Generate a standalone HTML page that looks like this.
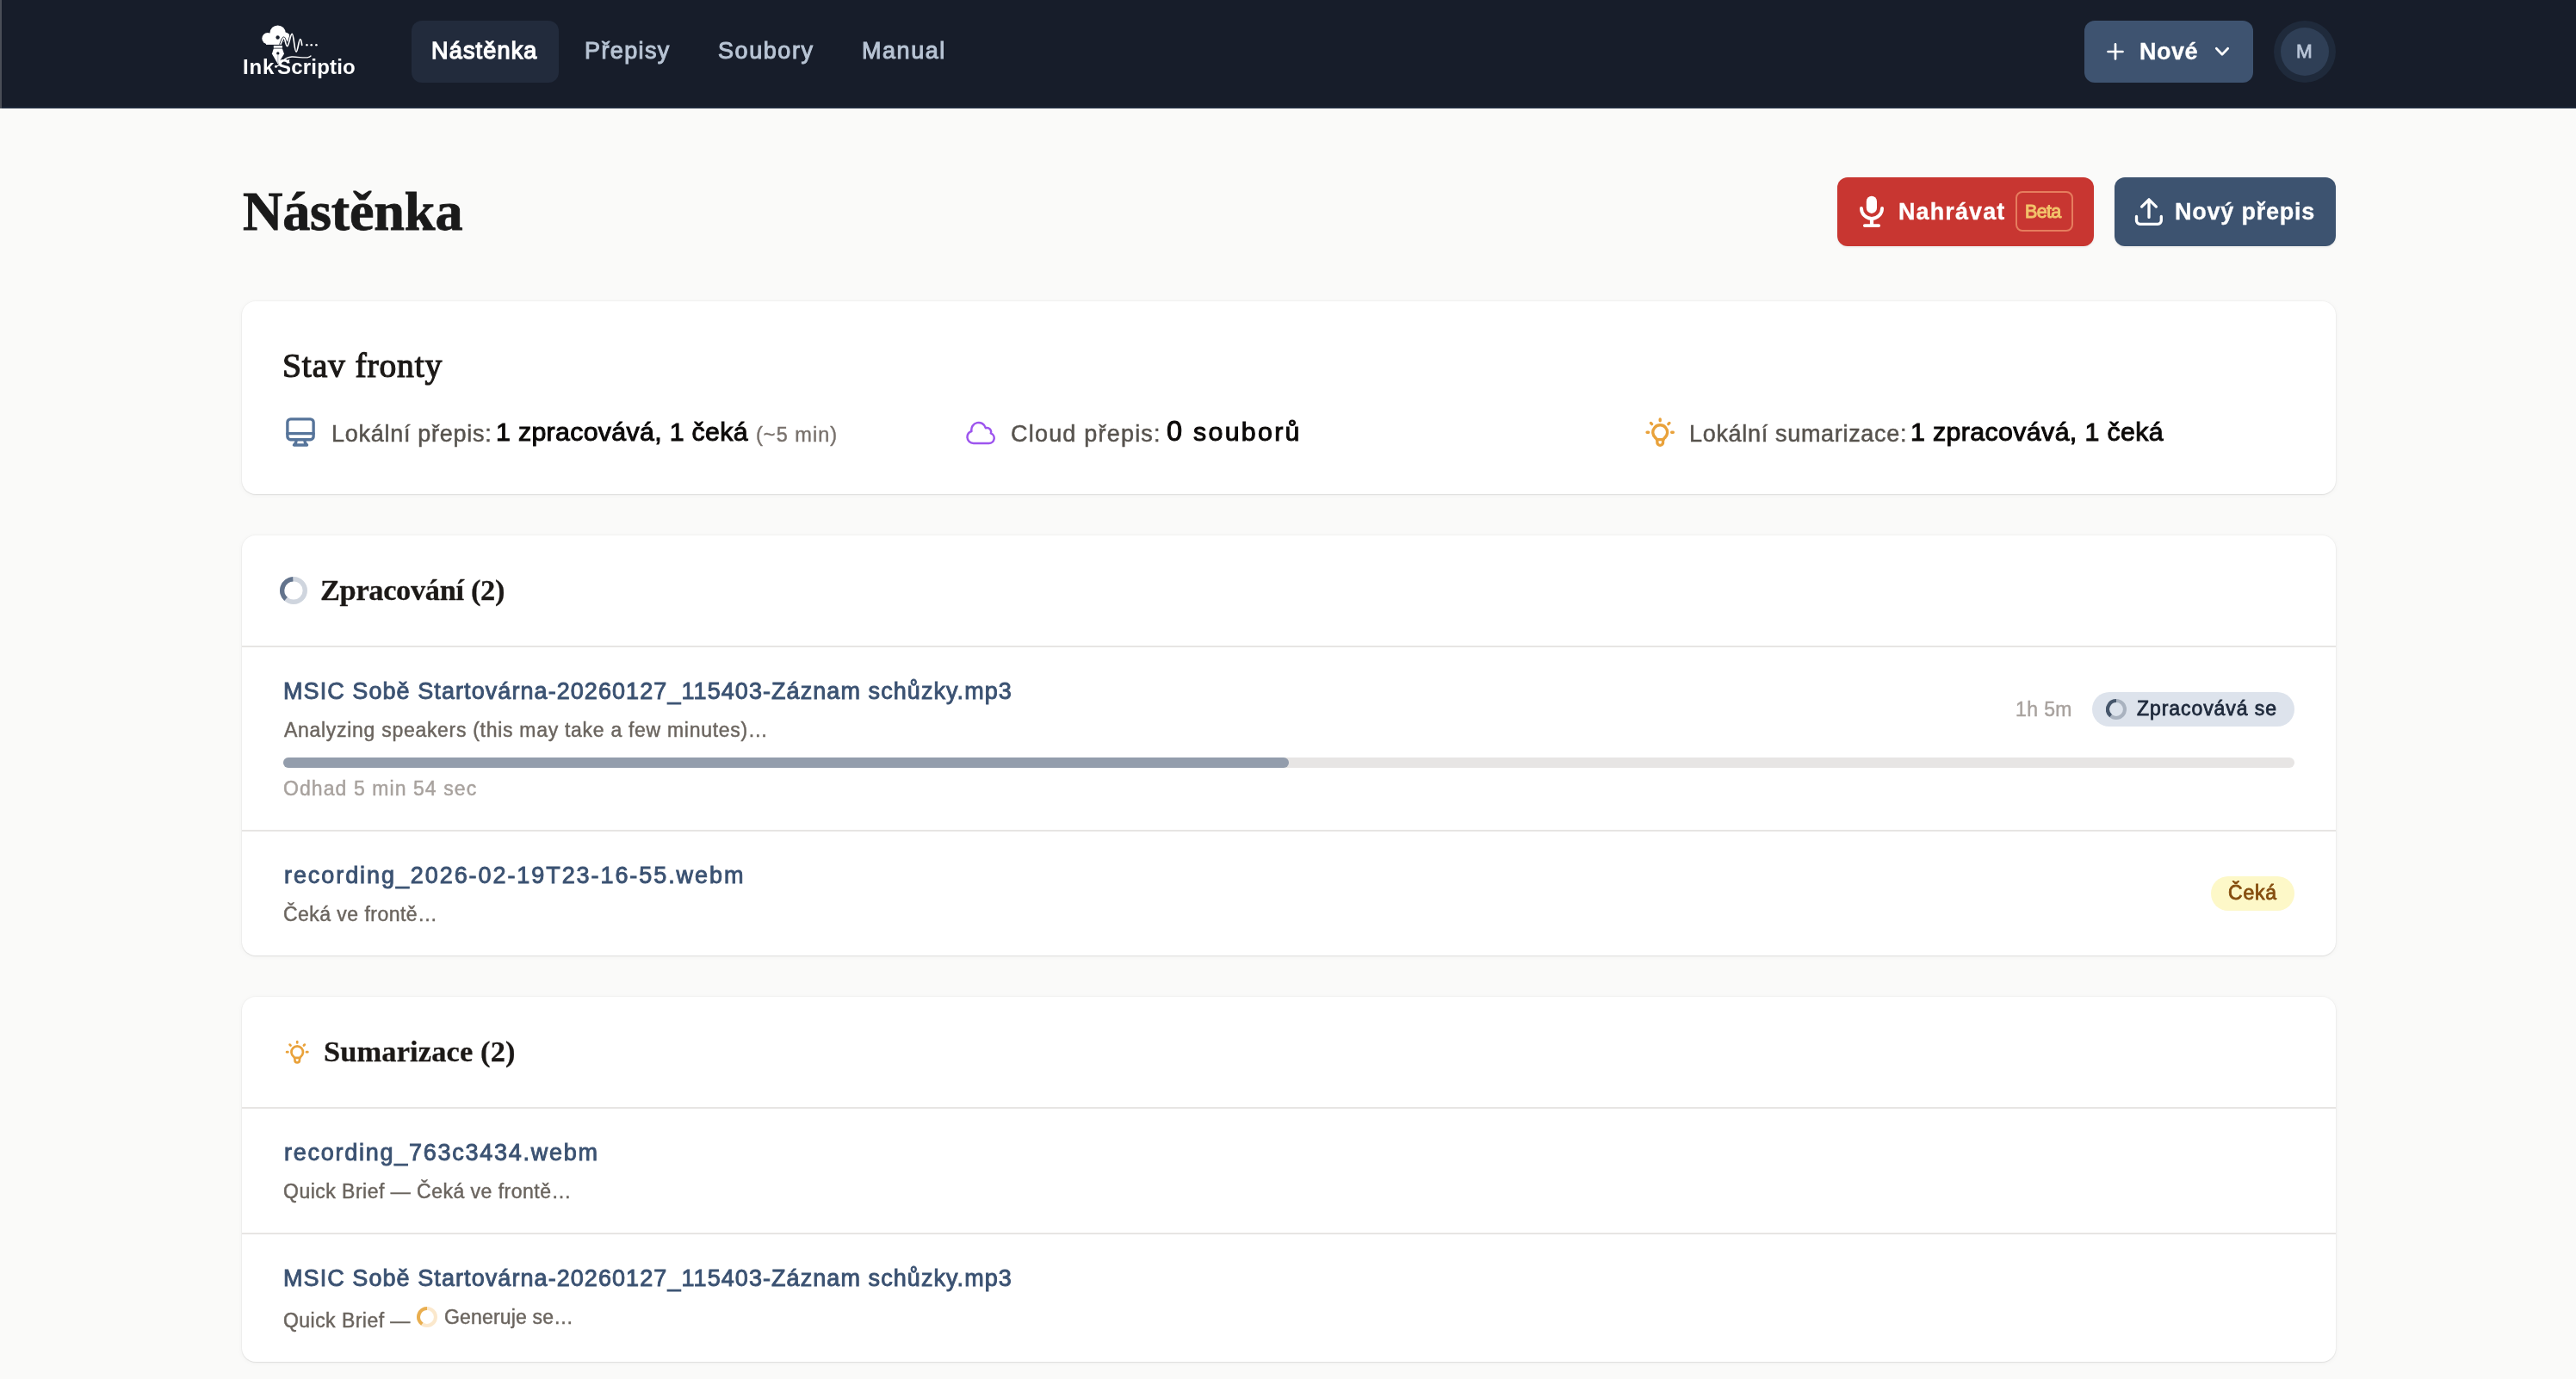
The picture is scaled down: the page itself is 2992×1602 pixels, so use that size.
<!DOCTYPE html><html lang="cs"><head><meta charset="utf-8"><title>Nástěnka – InkScriptio</title><style>html,body{margin:0;padding:0;width:2992px;height:1602px;overflow:hidden;background:#fafaf9;}.t{position:absolute;white-space:nowrap;line-height:80px;will-change:transform;}.S{font-family:"Liberation Sans",sans-serif}.F{font-family:"Liberation Serif",serif}@media (max-width:2000px){html{zoom:0.5}}</style></head><body>
<div style="position:absolute;left:0px;top:0px;width:2992px;height:124px;background:#171d2a;border-radius:0px;"></div>
<div style="position:absolute;left:0px;top:124px;width:2992px;height:2px;background:#1f2a3b;border-radius:0px;"></div>
<div style="position:absolute;left:0px;top:0px;width:2px;height:126px;background:#4a4e57;border-radius:0px;"></div>
<div style="position:absolute;left:478px;top:24px;width:171px;height:72px;background:#222b3c;border-radius:12px;"></div>
<div style="position:absolute;left:2421px;top:24px;width:196px;height:72px;background:#3e5370;border-radius:12px;"></div>
<div style="position:absolute;left:2641px;top:24px;width:72px;height:72px;border-radius:50%;background:#1f2a3b"></div>
<div style="position:absolute;left:2649px;top:32px;width:56px;height:56px;border-radius:50%;background:#2f3f56"></div>
<svg style="position:absolute;left:2440px;top:40px" width="40" height="40" viewBox="2440 40 40 40"><path d="M2457 51.3V68.5M2448.5 60H2465.5" stroke="#fff" stroke-width="2.7" stroke-linecap="round" fill="none"/></svg>
<svg style="position:absolute;left:2565px;top:45px" width="30" height="30" viewBox="2565 45 30 30"><path d="M2574.3 56.2L2581 63.2L2587.7 56.2" stroke="#fff" stroke-width="2.7" stroke-linecap="round" stroke-linejoin="round" fill="none"/></svg>
<svg style="position:absolute;left:270px;top:20px" width="160" height="80" viewBox="270 20 160 80"><g fill="#fff"><circle cx="310.9" cy="44.6" r="6.6"/><circle cx="322.6" cy="38.6" r="9.2"/><circle cx="331.2" cy="43.2" r="5.6"/><rect x="309" y="42" width="17.5" height="9.9"/><rect x="317.8" y="53" width="10.1" height="2.7"/><path d="M317.8 56.5H327.9L330 62.4L322.8 74.4L315.9 62.4Z"/></g><circle cx="322.6" cy="43.5" r="2.2" fill="#171d2a"/><circle cx="322.8" cy="62" r="1.7" fill="#171d2a"/><path d="M322.8 63.5V73.5" stroke="#c3c7ce" stroke-width="1.3"/><path d="M326.1 51.1C327.6 47.5 328.6 44.1 329.6 44.1C331.3 44.1 331.8 53.7 333.5 53.7C335.6 53.7 337.2 39.4 339.2 39.4C341.3 39.4 342 60.2 344 60.2C346 60.2 347 45.5 348.7 45.5C350 45.5 350.3 50 350.7 52.4" stroke="#171d2a" stroke-width="3.4" fill="none" stroke-linejoin="round" stroke-linecap="round"/><path d="M326.1 51.1C327.6 47.5 328.6 44.1 329.6 44.1C331.3 44.1 331.8 53.7 333.5 53.7C335.6 53.7 337.2 39.4 339.2 39.4C341.3 39.4 342 60.2 344 60.2C346 60.2 347 45.5 348.7 45.5C350 45.5 350.3 50 350.7 52.4" stroke="#fff" stroke-width="1.7" fill="none" stroke-linejoin="round" stroke-linecap="round"/><circle cx="356.4" cy="52.2" r="1.3" fill="#fff"/><circle cx="361.7" cy="52.2" r="1.3" fill="#fff"/><circle cx="367.4" cy="52.2" r="1.3" fill="#fff"/><path d="M320.5 77.2C323.5 77.2 326 73.5 328.5 70.8C331 68 334 66.2 339 66C346 65.8 352 67.6 357 66.8C359 66.5 360.3 65.8 361 65" stroke="#fff" stroke-width="1.3" fill="none" stroke-linecap="round"/><circle cx="320.5" cy="77.2" r="1.5" fill="#fff"/><path d="M333.2 70.6L336.4 68.8L335.6 72Z" fill="#fff"/></svg>
<div style="position:absolute;left:2134px;top:206px;width:298px;height:80px;background:#c83631;border-radius:12px;box-shadow:0 1px 3px rgba(0,0,0,0.08);"></div>
<div style="position:absolute;left:2341px;top:222px;width:66.6px;height:47.4px;box-sizing:border-box;border:2px solid rgba(240,150,110,0.75);border-radius:8px"></div>
<div style="position:absolute;left:2456px;top:206px;width:257px;height:80px;background:#3d5370;border-radius:12px;box-shadow:0 1px 3px rgba(0,0,0,0.08);"></div>
<svg style="position:absolute;left:2150px;top:220px" width="50" height="50" viewBox="2150 220 50 50"><rect x="2167.8" y="227.8" width="12.2" height="20.1" rx="6.1" fill="#fff"/><path d="M2161.95 241.95A12.05 12.05 0 0 0 2186.05 241.95" stroke="#fff" stroke-width="3.9" fill="none" stroke-linecap="round"/><path d="M2174 254V262" stroke="#fff" stroke-width="4.2"/><path d="M2165.9 262.1H2182.1" stroke="#fff" stroke-width="3.9" stroke-linecap="round"/></svg>
<svg style="position:absolute;left:2470px;top:220px" width="50" height="50" viewBox="2470 220 50 50"><path d="M2496 231.9V252.4M2487.6 240.1L2496 231.8L2504.4 240.1" stroke="#fff" stroke-width="3.3" fill="none" stroke-linecap="round" stroke-linejoin="round"/><path d="M2481.5 251.5V256.3A4 4 0 0 0 2485.5 260.3H2506.3A4 4 0 0 0 2510.3 256.3V251.5" stroke="#fff" stroke-width="3.3" fill="none" stroke-linecap="round"/></svg>
<div style="position:absolute;left:281px;top:350px;width:2432px;height:224px;background:#fff;border-radius:16px;box-shadow:0 0 0 1px rgba(0,0,0,0.018),0 1px 1.5px rgba(0,0,0,0.07),0 1px 6px rgba(0,0,0,0.045);"></div>
<div style="position:absolute;left:281px;top:622px;width:2432px;height:488px;background:#fff;border-radius:16px;box-shadow:0 0 0 1px rgba(0,0,0,0.018),0 1px 1.5px rgba(0,0,0,0.07),0 1px 6px rgba(0,0,0,0.045);"></div>
<div style="position:absolute;left:281px;top:1158px;width:2432px;height:424px;background:#fff;border-radius:16px;box-shadow:0 0 0 1px rgba(0,0,0,0.018),0 1px 1.5px rgba(0,0,0,0.07),0 1px 6px rgba(0,0,0,0.045);"></div>
<div style="position:absolute;left:281px;top:750px;width:2432px;height:2px;background:#e7e5e3;border-radius:0px;"></div>
<div style="position:absolute;left:281px;top:964px;width:2432px;height:2px;background:#e7e5e3;border-radius:0px;"></div>
<div style="position:absolute;left:281px;top:1286px;width:2432px;height:2px;background:#e7e5e3;border-radius:0px;"></div>
<div style="position:absolute;left:281px;top:1432px;width:2432px;height:2px;background:#e7e5e3;border-radius:0px;"></div>
<div style="position:absolute;left:329px;top:880px;width:2336px;height:12px;background:#e7e5e4;border-radius:6px;"></div>
<div style="position:absolute;left:329px;top:880px;width:1168px;height:12px;background:#939dac;border-radius:6px;"></div>
<div style="position:absolute;left:2430px;top:804px;width:235px;height:40px;background:#dde3ec;border-radius:20px;"></div>
<div style="position:absolute;left:2568px;top:1018px;width:97px;height:40px;background:#fdf8c8;border-radius:20px;"></div>
<svg style="position:absolute;left:325px;top:480px" width="48" height="44" viewBox="325 480 48 44"><g transform="translate(332.2 485.2) scale(1.68)" fill="none" stroke="#56749a" stroke-width="2" stroke-linecap="round" stroke-linejoin="round"><path d="M7 15.2v1.2a2 2 0 0 1-.6 1.4L5.5 18.9h9l-.9-1.1a2 2 0 0 1-.6-1.4v-1.2"/><rect x="1" y="1" width="18" height="14.2" rx="2.2"/><path d="M1 11H19"/></g></svg>
<svg style="position:absolute;left:1116px;top:482px" width="46" height="40" viewBox="1116 482 46 40"><g transform="translate(1119.9 483.8) scale(1.6)" fill="none" stroke="#9d55ee" stroke-width="1.55" stroke-linecap="round" stroke-linejoin="round"><path d="M2.25 15a4.5 4.5 0 0 0 4.5 4.5H18a3.75 3.75 0 0 0 1.332-7.257 3 3 0 0 0-3.758-3.848 5.25 5.25 0 0 0-10.233 2.33A4.502 4.502 0 0 0 2.25 15Z"/></g></svg>
<svg style="position:absolute;left:1904.4px;top:477.8px" width="48.4" height="48.4" viewBox="1904.4 477.8 48.4 48.4"><g transform="translate(1908.4 481.8) scale(1.6833333333333333)" fill="none" stroke="#e9a23b" stroke-width="2" stroke-linecap="round" stroke-linejoin="round"><path d="M3 12h1m8-9v1m8 8h1M5.6 5.6l.7.7m12.1-.7-.7.7"/><path d="M9 16a5 5 0 1 1 6 0a3.5 3.5 0 0 0-1 3a2 2 0 0 1-4 0a3.5 3.5 0 0 0-1-3"/><path d="M9.7 17h4.6"/></g></svg>
<svg style="position:absolute;left:324.8px;top:1202.3px" width="40.4" height="40.4" viewBox="324.8 1202.3 40.4 40.4"><g transform="translate(328.8 1206.3) scale(1.3499999999999999)" fill="none" stroke="#e9a23b" stroke-width="2" stroke-linecap="round" stroke-linejoin="round"><path d="M3 12h1m8-9v1m8 8h1M5.6 5.6l.7.7m12.1-.7-.7.7"/><path d="M9 16a5 5 0 1 1 6 0a3.5 3.5 0 0 0-1 3a2 2 0 0 1-4 0a3.5 3.5 0 0 0-1-3"/><path d="M9.7 17h4.6"/></g></svg>
<svg style="position:absolute;left:324.7px;top:670.0px" width="32" height="32" viewBox="324.7 670.0 32 32"><circle cx="340.7" cy="686" r="13.3" fill="none" stroke="#cfd5de" stroke-width="5.4"/><path d="M331.80 695.88A13.3 13.3 0 0 1 340.00 672.72" fill="none" stroke="#62738c" stroke-width="5.4"/></svg>
<svg style="position:absolute;left:2445.9px;top:812.0px" width="24" height="24" viewBox="2445.9 812.0 24 24"><circle cx="2457.9" cy="824" r="9.95" fill="none" stroke="#a9b2bf" stroke-width="4.1"/><path d="M2451.50 831.62A9.95 9.95 0 0 1 2457.90 814.05" fill="none" stroke="#46566b" stroke-width="4.1"/></svg>
<svg style="position:absolute;left:483.9px;top:1517.8px" width="24" height="24" viewBox="483.9 1517.8 24 24"><circle cx="495.9" cy="1529.8" r="9.95" fill="none" stroke="#fbe8cc" stroke-width="4.1"/><path d="M490.19 1537.95A9.95 9.95 0 0 1 495.90 1519.85" fill="none" stroke="#e9ae4f" stroke-width="4.1"/></svg>
<div class="t S" style="left:281.8px;top:37.9px;font-size:24.0px;font-weight:700;letter-spacing:0.8px;color:#ffffff;-webkit-text-stroke:0px #ffffff">Ink</div>
<div class="t S" style="left:322.2px;top:37.9px;font-size:24.0px;font-weight:700;letter-spacing:0.2px;color:#ffffff;-webkit-text-stroke:0px #ffffff">Scriptio</div>
<div class="t S" style="left:500.9px;top:19.1px;font-size:27.0px;font-weight:400;letter-spacing:1.186px;color:#ffffff;-webkit-text-stroke:1.3px #ffffff">Nástěnka</div>
<div class="t S" style="left:679.3px;top:19.1px;font-size:27.0px;font-weight:400;letter-spacing:1.383px;color:#b8c4d4;-webkit-text-stroke:1.0px #b8c4d4">Přepisy</div>
<div class="t S" style="left:834.2px;top:19.1px;font-size:27.0px;font-weight:400;letter-spacing:1.567px;color:#b8c4d4;-webkit-text-stroke:1.0px #b8c4d4">Soubory</div>
<div class="t S" style="left:1000.5px;top:19.1px;font-size:27.0px;font-weight:400;letter-spacing:1.54px;color:#b8c4d4;-webkit-text-stroke:1.0px #b8c4d4">Manual</div>
<div class="t S" style="left:2484.8px;top:20.0px;font-size:27.0px;font-weight:700;letter-spacing:0.533px;color:#ffffff;-webkit-text-stroke:0.3px #ffffff">Nové</div>
<div class="t S" style="left:2666.7px;top:20.2px;font-size:22.5px;font-weight:400;letter-spacing:0.0px;color:#b9c6d8;-webkit-text-stroke:0.8px #b9c6d8">M</div>
<div class="t F" style="left:282.3px;top:206px;font-size:64.2px;font-weight:700;letter-spacing:-0.186px;color:#1a1a1a;-webkit-text-stroke:0.9px #1a1a1a">Nástěnka</div>
<div class="t S" style="left:2204.6px;top:206px;font-size:27.0px;font-weight:700;letter-spacing:1.1px;color:#ffffff;-webkit-text-stroke:0.3px #ffffff">Nahrávat</div>
<div class="t S" style="left:2352px;top:205.8px;font-size:21.5px;font-weight:400;letter-spacing:-0.667px;color:#f2c46b;-webkit-text-stroke:1.0px #f2c46b">Beta</div>
<div class="t S" style="left:2526.4px;top:206px;font-size:27.0px;font-weight:700;letter-spacing:0.78px;color:#ffffff;-webkit-text-stroke:0.3px #ffffff">Nový přepis</div>
<div class="t F" style="left:328.4px;top:385.2px;font-size:39.6px;font-weight:400;letter-spacing:0.83px;color:#1c1917;-webkit-text-stroke:1.2px #1c1917">Stav fronty</div>
<div class="t S" style="left:385.1px;top:463.9px;font-size:27.0px;font-weight:400;letter-spacing:0.721px;color:#57534e;-webkit-text-stroke:0.5px #57534e">Lokální přepis:</div>
<div class="t S" style="left:575.9px;top:461.8px;font-size:30.3px;font-weight:400;letter-spacing:0.332px;color:#0c0a09;-webkit-text-stroke:1.0px #0c0a09">1 zpracovává, 1 čeká</div>
<div class="t S" style="left:877.8px;top:464.5px;font-size:23.5px;font-weight:400;letter-spacing:1.043px;color:#78716c;-webkit-text-stroke:0.4px #78716c">(~5 min)</div>
<div class="t S" style="left:1174px;top:463.9px;font-size:27.0px;font-weight:400;letter-spacing:1.208px;color:#57534e;-webkit-text-stroke:0.5px #57534e">Cloud přepis:</div>
<div class="t S" style="left:1355.2px;top:460.8px;font-size:32.5px;font-weight:400;letter-spacing:0.0px;color:#0c0a09;-webkit-text-stroke:1.0px #0c0a09">0</div>
<div class="t S" style="left:1385.7px;top:461.8px;font-size:30.3px;font-weight:400;letter-spacing:2.317px;color:#0c0a09;-webkit-text-stroke:1.0px #0c0a09">souborů</div>
<div class="t S" style="left:1962.4px;top:463.9px;font-size:27.0px;font-weight:400;letter-spacing:0.683px;color:#57534e;-webkit-text-stroke:0.5px #57534e">Lokální sumarizace:</div>
<div class="t S" style="left:2218.5px;top:461.8px;font-size:30.3px;font-weight:400;letter-spacing:0.389px;color:#0c0a09;-webkit-text-stroke:1.0px #0c0a09">1 zpracovává, 1 čeká</div>
<div class="t F" style="left:372.2px;top:644.9px;font-size:34.4px;font-weight:700;letter-spacing:-0.338px;color:#1c1917;-webkit-text-stroke:0.3px #1c1917">Zpracování (2)</div>
<div class="t S" style="left:328.9px;top:762.9px;font-size:27.0px;font-weight:400;letter-spacing:1.071px;color:#3b5272;-webkit-text-stroke:0.9px #3b5272">MSIC Sobě Startovárna-20260127_115403-Záznam schůzky.mp3</div>
<div class="t S" style="left:329.7px;top:807.8px;font-size:23.0px;font-weight:400;letter-spacing:0.706px;color:#6b655f;-webkit-text-stroke:0.45px #6b655f">Analyzing speakers (this may take a few minutes)…</div>
<div class="t S" style="left:328.9px;top:875.8px;font-size:23.0px;font-weight:400;letter-spacing:1.076px;color:#a8a29e;-webkit-text-stroke:0.45px #a8a29e">Odhad 5 min 54 sec</div>
<div class="t S" style="left:2341px;top:784.2px;font-size:23.0px;font-weight:400;letter-spacing:0.4px;color:#a8a29e;-webkit-text-stroke:0.45px #a8a29e">1h 5m</div>
<div class="t S" style="left:2482.3px;top:783.2px;font-size:23.0px;font-weight:400;letter-spacing:0.925px;color:#1e293b;-webkit-text-stroke:0.8px #1e293b">Zpracovává se</div>
<div class="t S" style="left:329.8px;top:976.9px;font-size:27.0px;font-weight:400;letter-spacing:1.927px;color:#3b5272;-webkit-text-stroke:0.9px #3b5272">recording_2026-02-19T23-16-55.webm</div>
<div class="t S" style="left:329.2px;top:1021.9px;font-size:23.0px;font-weight:400;letter-spacing:0.457px;color:#6b655f;-webkit-text-stroke:0.45px #6b655f">Čeká ve frontě…</div>
<div class="t S" style="left:2588px;top:997.1px;font-size:23.0px;font-weight:400;letter-spacing:0.767px;color:#854d0e;-webkit-text-stroke:0.8px #854d0e">Čeká</div>
<div class="t F" style="left:375.8px;top:1181.4px;font-size:34.4px;font-weight:700;letter-spacing:0.146px;color:#1c1917;-webkit-text-stroke:0.3px #1c1917">Sumarizace (2)</div>
<div class="t S" style="left:329.8px;top:1298.9px;font-size:27.0px;font-weight:400;letter-spacing:1.745px;color:#3b5272;-webkit-text-stroke:0.9px #3b5272">recording_763c3434.webm</div>
<div class="t S" style="left:328.8px;top:1343.9px;font-size:23.0px;font-weight:400;letter-spacing:0.486px;color:#6b655f;-webkit-text-stroke:0.45px #6b655f">Quick Brief — Čeká ve frontě…</div>
<div class="t S" style="left:328.9px;top:1444.9px;font-size:27.0px;font-weight:400;letter-spacing:1.071px;color:#3b5272;-webkit-text-stroke:0.9px #3b5272">MSIC Sobě Startovárna-20260127_115403-Záznam schůzky.mp3</div>
<div class="t S" style="left:328.8px;top:1494.0px;font-size:23.0px;font-weight:400;letter-spacing:0.458px;color:#6b655f;-webkit-text-stroke:0.45px #6b655f">Quick Brief —</div>
<div class="t S" style="left:516.1px;top:1489.8px;font-size:23.0px;font-weight:400;letter-spacing:0.164px;color:#6b655f;-webkit-text-stroke:0.45px #6b655f">Generuje se…</div>
</body></html>
